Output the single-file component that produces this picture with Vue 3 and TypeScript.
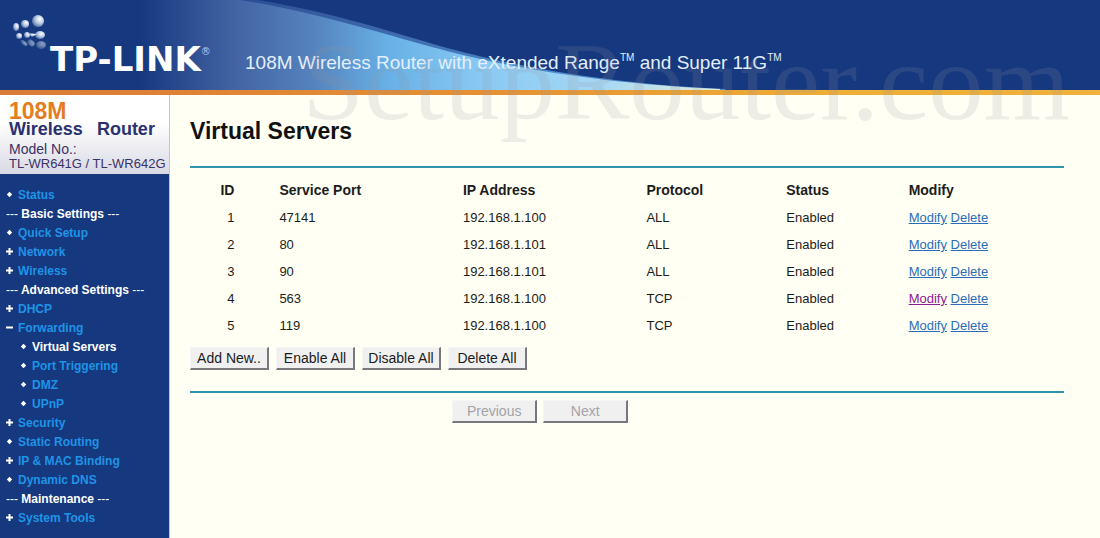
<script setup lang="ts">
type Marker = 'dot' | 'plus' | 'minus'
interface NavItem {
  label: string
  kind: 'link' | 'heading'
  marker?: Marker
  child?: boolean
  current?: boolean
}
interface ServerRow {
  id: number
  port: string
  ip: string
  protocol: string
  status: string
  visited?: boolean
}

const nav: NavItem[] = [
  { label: 'Status', kind: 'link', marker: 'dot' },
  { label: 'Basic Settings', kind: 'heading' },
  { label: 'Quick Setup', kind: 'link', marker: 'dot' },
  { label: 'Network', kind: 'link', marker: 'plus' },
  { label: 'Wireless', kind: 'link', marker: 'plus' },
  { label: 'Advanced Settings', kind: 'heading' },
  { label: 'DHCP', kind: 'link', marker: 'plus' },
  { label: 'Forwarding', kind: 'link', marker: 'minus' },
  { label: 'Virtual Servers', kind: 'link', marker: 'dot', child: true, current: true },
  { label: 'Port Triggering', kind: 'link', marker: 'dot', child: true },
  { label: 'DMZ', kind: 'link', marker: 'dot', child: true },
  { label: 'UPnP', kind: 'link', marker: 'dot', child: true },
  { label: 'Security', kind: 'link', marker: 'plus' },
  { label: 'Static Routing', kind: 'link', marker: 'dot' },
  { label: 'IP & MAC Binding', kind: 'link', marker: 'plus' },
  { label: 'Dynamic DNS', kind: 'link', marker: 'dot' },
  { label: 'Maintenance', kind: 'heading' },
  { label: 'System Tools', kind: 'link', marker: 'plus' },
]

const markerPaths: Record<Marker, string> = {
  dot: 'M3.5 0.8 6.2 3.5 3.5 6.2 0.8 3.5Z',
  plus: 'M2.5 0h2v2.5h2.5v2h-2.5v2.5h-2v-2.5h-2.5v-2h2.5Z',
  minus: 'M0 2.5h7v2h-7Z',
}

const columns: string[] = ['ID', 'Service Port', 'IP Address', 'Protocol', 'Status', 'Modify']

const rows: ServerRow[] = [
  { id: 1, port: '47141', ip: '192.168.1.100', protocol: 'ALL', status: 'Enabled' },
  { id: 2, port: '80', ip: '192.168.1.101', protocol: 'ALL', status: 'Enabled' },
  { id: 3, port: '90', ip: '192.168.1.101', protocol: 'ALL', status: 'Enabled' },
  { id: 4, port: '563', ip: '192.168.1.100', protocol: 'TCP', status: 'Enabled', visited: true },
  { id: 5, port: '119', ip: '192.168.1.100', protocol: 'TCP', status: 'Enabled' },
]

const actions: string[] = ['Add New..', 'Enable All', 'Disable All', 'Delete All']
</script>

<template>
  <div class="page">
    <header class="banner">
      <svg class="swoosh" width="760" height="90" viewBox="0 0 760 90" aria-hidden="true">
        <defs>
          <linearGradient id="glow" gradientUnits="userSpaceOnUse" x1="140" y1="0" x2="720" y2="0">
            <stop offset="0" stop-color="#16387f" />
            <stop offset="0.16" stop-color="#4263a2" />
            <stop offset="0.3" stop-color="#5583bd" />
            <stop offset="0.43" stop-color="#68b1e6" />
            <stop offset="0.6" stop-color="#8bcaf4" />
            <stop offset="0.8" stop-color="#a6d8f3" />
            <stop offset="1" stop-color="#e4ecd8" />
          </linearGradient>
          <linearGradient id="edge" gradientUnits="userSpaceOnUse" x1="140" y1="0" x2="560" y2="0">
            <stop offset="0" stop-color="#16387f" />
            <stop offset="0.4" stop-color="#355a9f" />
            <stop offset="1" stop-color="#4c8ccb" />
          </linearGradient>
        </defs>
        <path fill="url(#edge)" d="M140 0H258C335 13 395 33 440 46C508 65 606 84 725 89V90H140Z" />
        <path fill="url(#glow)" d="M140 0H240C310 11 380 33 432 47C500 66 600 84 720 89V90H140Z" />
      </svg>
      <svg class="orbs" width="40" height="40" viewBox="0 0 40 40" aria-hidden="true">
        <defs>
          <radialGradient id="orb" cx="0.65" cy="0.35" r="0.8">
            <stop offset="0" stop-color="#ffffff" />
            <stop offset="0.45" stop-color="#b9c8e2" />
            <stop offset="1" stop-color="#32528f" />
          </radialGradient>
        </defs>
        <g fill="url(#orb)">
          <ellipse cx="28" cy="10" rx="6" ry="6" />
          <ellipse cx="15" cy="13" rx="4" ry="4" />
          <ellipse cx="6" cy="16" rx="3" ry="4" />
          <ellipse cx="30" cy="24" rx="5" ry="4" />
          <ellipse cx="17" cy="24" rx="3" ry="3" />
          <ellipse cx="9" cy="25" rx="3" ry="3" />
          <path d="M18 22 27 23 22 26Z" />
        </g>
        <g fill="url(#orb)" opacity="0.5">
          <ellipse cx="31" cy="34" rx="5" ry="4" />
          <ellipse cx="21" cy="32" rx="4" ry="3" transform="rotate(40 21 32)" />
          <ellipse cx="14" cy="32" rx="4" ry="2" transform="rotate(40 14 32)" />
        </g>
      </svg>
      <span class="wordmark">TP-LINK<sup>®</sup></span>
      <p class="tagline">108M Wireless Router with eXtended Range<sup>TM</sup> and Super 11G<sup>TM</sup></p>
    </header>

    <div class="body">
      <aside class="sidebar">
        <div class="model">
          <strong class="speed">108M</strong>
          <strong class="family"><span>Wireless</span><span>Router</span></strong>
          <span class="model-label">Model No.:</span>
          <span class="model-name">TL-WR641G / TL-WR642G</span>
        </div>
        <nav class="menu" aria-label="Router settings">
          <ul>
            <li v-for="item in nav" :key="item.label" :class="{ child: item.child }">
              <span v-if="item.kind === 'heading'" class="heading"><i>---</i> {{ item.label }} <i>---</i></span>
              <template v-else>
                <svg class="marker" width="7" height="7" viewBox="0 0 7 7" aria-hidden="true">
                  <path :d="markerPaths[item.marker ?? 'dot']" />
                </svg>
                <a href="#" :class="{ current: item.current }">{{ item.label }}</a>
              </template>
            </li>
          </ul>
        </nav>
      </aside>

      <main class="content">
        <h1>Virtual Servers</h1>
        <hr />
        <table>
          <colgroup>
            <col v-for="column in columns" :key="column" :class="'col-' + column.split(' ')[0].toLowerCase()" />
          </colgroup>
          <thead>
            <tr>
              <th v-for="column in columns" :key="column" scope="col">{{ column }}</th>
            </tr>
          </thead>
          <tbody>
            <tr v-for="row in rows" :key="row.id">
              <td>{{ row.id }}</td>
              <td>{{ row.port }}</td>
              <td>{{ row.ip }}</td>
              <td>{{ row.protocol }}</td>
              <td>{{ row.status }}</td>
              <td><a href="#" :class="{ visited: row.visited }">Modify</a> <a href="#">Delete</a></td>
            </tr>
          </tbody>
        </table>
        <div class="actions">
          <button v-for="action in actions" :key="action" type="button">{{ action }}</button>
        </div>
        <hr />
        <div class="pager">
          <button type="button" disabled>Previous</button>
          <button type="button" disabled>Next</button>
        </div>
      </main>
    </div>
    <div class="watermark" aria-hidden="true">SetupRouter.com</div>
  </div>
</template>

<style>
body {
  margin: 0;
  background: #fffff3;
}
</style>

<style scoped>
.page {
  position: relative;
  display: flex;
  flex-direction: column;
  min-height: 100vh;
  overflow: hidden;
  background: #fffff3;
  color: #1c1c1c;
  font-family: "Liberation Sans", Arial, sans-serif;
  font-size: 13px;
}

.banner {
  position: relative;
  display: flex;
  height: 90px;
  background: #16387f;
  border-bottom: 5px solid;
  border-image: linear-gradient(90deg, #d97b38, #e69132 45%, #efae35 75%, #f0b23c) 1;
}

.swoosh {
  position: absolute;
  top: 0;
  left: 0;
}

.orbs {
  position: absolute;
  top: 11px;
  left: 10px;
}

.wordmark {
  position: relative;
  flex: none;
  width: 195px;
  padding: 41px 0 0 50px;
  color: #ffffff;
  font-family: "DejaVu Sans", sans-serif;
  font-size: 34px;
  font-weight: bold;
  line-height: 36px;
}

.wordmark sup {
  font-size: 10px;
  font-weight: normal;
  line-height: 10px;
  vertical-align: 16px;
  color: #b9c8ee;
}

.tagline {
  position: relative;
  margin: 0;
  padding-top: 51px;
  color: #e3effc;
  font-size: 19px;
  line-height: 24px;
  white-space: nowrap;
}

.tagline sup {
  font-size: 10px;
  line-height: 10px;
  vertical-align: 8px;
}

.body {
  display: flex;
  flex: 1;
}

.sidebar {
  display: flex;
  flex: none;
  flex-direction: column;
  box-sizing: border-box;
  width: 170px;
  border-right: 1px solid #c5c3dc;
}

.model {
  display: flex;
  flex-direction: column;
  box-sizing: border-box;
  height: 79px;
  padding: 7px 0 0 9px;
  background: linear-gradient(#ffffff 35%, #d9d9e4);
  color: #3a3267;
  white-space: nowrap;
}

.speed {
  color: #e57c22;
  font-size: 23px;
  line-height: 19px;
}

.family {
  display: flex;
  gap: 14px;
  color: #2a3170;
  font-size: 18px;
  line-height: 16px;
}

.model-label {
  margin-top: 4px;
  font-size: 14px;
  line-height: 16px;
}

.model-name {
  line-height: 14px;
}

.menu {
  flex: 1;
  background: #16387f;
}

.menu ul {
  margin: 0;
  padding: 11px 0 0 6px;
  list-style: none;
}

.menu li {
  display: flex;
  align-items: center;
  gap: 5px;
  height: 19px;
  font-size: 12px;
  font-weight: bold;
  white-space: nowrap;
}

.menu .child {
  padding-left: 14px;
}

.menu a {
  color: #1e94e6;
  text-decoration: none;
}

.menu a.current,
.heading {
  color: #ffffff;
}

.heading i {
  font-style: normal;
  font-weight: normal;
}

.marker {
  fill: #ffffff;
}

.content {
  flex: 1;
  min-width: 0;
  padding: 22px 36px 0 20px;
}

h1 {
  margin: 0;
  color: #111111;
  font-size: 23px;
  line-height: 28px;
}

hr {
  height: 2px;
  margin: 0;
  border: 0;
  background: #2f93a9;
}

h1 + hr {
  margin-top: 21px;
}

table {
  width: 100%;
  margin-top: 7px;
  border-collapse: collapse;
  table-layout: fixed;
}

.col-id {
  width: 10%;
}

.col-service,
.col-ip {
  width: 21%;
}

.col-protocol {
  width: 16%;
}

.col-status {
  width: 14%;
}

th,
td {
  height: 27px;
  padding: 0 0 0 2px;
  text-align: left;
}

th {
  height: 29px;
  font-size: 14px;
}

th:first-child,
td:first-child {
  padding-right: 43px;
  text-align: right;
}

td a {
  color: #2b6cb8;
}

td a.visited {
  color: #8c2090;
}

.actions {
  display: flex;
  gap: 7px;
  margin: 8px 0 21px;
}

button {
  box-sizing: border-box;
  width: 79px;
  height: 23px;
  padding: 0;
  border: 1px solid #f6f6f6;
  border-right: 2px solid #77777c;
  border-bottom: 2px solid #77777c;
  background: #f0f0f0;
  color: #1c1c1c;
  font-family: inherit;
  font-size: 14px;
  white-space: nowrap;
}

.pager {
  display: flex;
  gap: 6px;
  margin: 7px 0 0 30%;
}

.pager button {
  width: 85px;
  color: #a3a3a8;
}

.watermark {
  position: absolute;
  top: 19px;
  right: 30px;
  color: rgba(150, 150, 160, 0.17);
  font-family: "Liberation Serif", serif;
  font-size: 111px;
  line-height: 125px;
  pointer-events: none;
}
</style>
